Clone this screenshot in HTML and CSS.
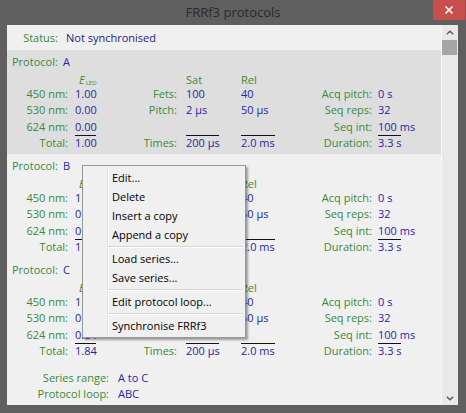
FILE: index.html
```html
<!DOCTYPE html>
<html>
<head>
<meta charset="utf-8">
<link rel="stylesheet" href="styles.css">
</head>
<body>
<div class="window">
  <div class="titlebar">
    <span class="title">FRRf3 protocols</span>
    <span class="close"><svg width="10" height="10" viewBox="0 0 10 10"><path d="M1.5 1.5L8.5 8.5M8.5 1.5L1.5 8.5" stroke="#fff" stroke-width="1.6"/></svg></span>
  </div>
  <div class="client">
    <div class="content">
      <div class="status"><span class="lbl">Status:</span><span class="val sv">Not synchronised</span></div>

      <div class="protocol selected">
        <div class="ptitle"><span class="lbl pl">Protocol:</span><span class="val">A</span></div>
        <div class="grid">
          <span></span><span class="hdr eled"><i>E</i><sub>LED</sub></span><span></span><span class="hdr v2">Sat</span><span class="hdr">Rel</span><span></span><span></span>
          <span class="lbl r">450 nm:</span><span class="val v1">1.00</span><span class="lbl r">Fets:</span><span class="val v2">100</span><span class="val">40</span><span class="lbl r">Acq pitch:</span><span class="val v4">0 s</span>
          <span class="lbl r">530 nm:</span><span class="val v1">0.00</span><span class="lbl r">Pitch:</span><span class="val v2">2 µs</span><span class="val">50 µs</span><span class="lbl r">Seq reps:</span><span class="val v4">32</span>
          <span class="lbl r">624 nm:</span><span class="val v1">0.00</span><span></span><span></span><span></span><span class="lbl r">Seq int:</span><span class="val v4">100 ms</span>
          <span class="lbl r">Total:</span><span class="val v1 ul ul-e">1.00</span><span class="lbl r">Times:</span><span class="val v2 ul ul-s">200 µs</span><span class="val ul ul-r">2.0 ms</span><span class="lbl r">Duration:</span><span class="val v4 ul ul-d">3.3 s</span>
        </div>
      </div>

      <div class="protocol">
        <div class="ptitle"><span class="lbl pl">Protocol:</span><span class="val">B</span></div>
        <div class="grid">
          <span></span><span class="hdr eled"><i>E</i><sub>LED</sub></span><span></span><span class="hdr v2">Sat</span><span class="hdr">Rel</span><span></span><span></span>
          <span class="lbl r">450 nm:</span><span class="val v1">1.00</span><span class="lbl r">Fets:</span><span class="val v2">100</span><span class="val">40</span><span class="lbl r">Acq pitch:</span><span class="val v4">0 s</span>
          <span class="lbl r">530 nm:</span><span class="val v1">0.00</span><span class="lbl r">Pitch:</span><span class="val v2">2 µs</span><span class="val">50 µs</span><span class="lbl r">Seq reps:</span><span class="val v4">32</span>
          <span class="lbl r">624 nm:</span><span class="val v1">0.00</span><span></span><span></span><span></span><span class="lbl r">Seq int:</span><span class="val v4">100 ms</span>
          <span class="lbl r">Total:</span><span class="val v1 ul ul-e">1.00</span><span class="lbl r">Times:</span><span class="val v2 ul ul-s">200 µs</span><span class="val ul ul-r">2.0 ms</span><span class="lbl r">Duration:</span><span class="val v4 ul ul-d">3.3 s</span>
        </div>
      </div>

      <div class="protocol">
        <div class="ptitle"><span class="lbl pl">Protocol:</span><span class="val">C</span></div>
        <div class="grid">
          <span></span><span class="hdr eled"><i>E</i><sub>LED</sub></span><span></span><span class="hdr v2">Sat</span><span class="hdr">Rel</span><span></span><span></span>
          <span class="lbl r">450 nm:</span><span class="val v1">1.00</span><span class="lbl r">Fets:</span><span class="val v2">100</span><span class="val">40</span><span class="lbl r">Acq pitch:</span><span class="val v4">0 s</span>
          <span class="lbl r">530 nm:</span><span class="val v1">0.00</span><span class="lbl r">Pitch:</span><span class="val v2">2 µs</span><span class="val">50 µs</span><span class="lbl r">Seq reps:</span><span class="val v4">32</span>
          <span class="lbl r">624 nm:</span><span class="val v1">0.84</span><span></span><span></span><span></span><span class="lbl r">Seq int:</span><span class="val v4">100 ms</span>
          <span class="lbl r">Total:</span><span class="val v1 ul ul-e">1.84</span><span class="lbl r">Times:</span><span class="val v2 ul ul-s">200 µs</span><span class="val ul ul-r">2.0 ms</span><span class="lbl r">Duration:</span><span class="val v4 ul ul-d">3.3 s</span>
        </div>
      </div>

      <div class="series">
        <span class="lbl r">Series range:</span><span class="val sv2">A to C</span>
        <span class="lbl r">Protocol loop:</span><span class="val sv2">ABC</span>
      </div>
    </div>
    <div class="scrollbar">
      <div class="arrow up"><svg width="8" height="5" viewBox="0 0 8 5"><path d="M0.8 4.2L4 1.2L7.2 4.2" fill="none" stroke="#5a5a5a" stroke-width="1.4"/></svg></div>
      <div class="thumb"></div>
      <div class="arrow down"><svg width="8" height="5" viewBox="0 0 8 5"><path d="M0.8 0.8L4 3.8L7.2 0.8" fill="none" stroke="#5a5a5a" stroke-width="1.4"/></svg></div>
    </div>
  </div>

  <div class="menu">
    <div class="item">Edit...</div>
    <div class="item">Delete</div>
    <div class="item">Insert a copy</div>
    <div class="item">Append a copy</div>
    <div class="sep"></div>
    <div class="item">Load series...</div>
    <div class="item">Save series...</div>
    <div class="sep"></div>
    <div class="item">Edit protocol loop...</div>
    <div class="sep"></div>
    <div class="item">Synchronise FRRf3</div>
  </div>
</div>
</body>
</html>
```
FILE: styles.css
```css
html, body {
  margin: 0;
  padding: 0;
  background: #5f5f5f;
}
body {
  font-family: "Open Sans", "Noto Sans", sans-serif;
  font-size: 11px;
}
.window {
  position: relative;
  width: 466px;
  height: 413px;
  background: #5f5f5f;
  display: flex;
  flex-direction: column;
  overflow: hidden;
}
.titlebar {
  height: 25px;
  display: grid;
  grid-template-columns: 1fr auto 1fr;
}
.title {
  grid-column: 2;
  font-size: 13px;
  line-height: 25px;
  color: #2a2a2a;
}
.close {
  grid-column: 3;
  justify-self: end;
  width: 32px;
  height: 20px;
  margin-right: 1px;
  background: #c7504c;
  display: flex;
  align-items: center;
  justify-content: center;
}
.client {
  margin: 0 8px 0 7px;
  height: 380px;
  display: flex;
  background: #f0f0f0;
}
.content {
  flex: 1;
  overflow: hidden;
}
.lbl { color: #398a39; white-space: nowrap; }
.val { color: #2626a6; white-space: nowrap; }
.sv { color: #22228a; }
.r { text-align: right; }

.status {
  height: 25px;
  line-height: 25px;
  display: grid;
  grid-template-columns: 51px auto;
}
.status .lbl { text-align: right; }
.status .val { padding-left: 8px; }

.protocol {
  height: 104px;
  box-sizing: border-box;
  padding-top: 4px;
}
.protocol.selected { background: #dedede; }
.ptitle {
  display: flex;
  line-height: 16px;
}
.ptitle .pl {
  width: 51px;
  padding-left: 5px;
}
.grid {
  display: grid;
  grid-template-columns: 61px 52px 57px 64px 56px 75px 1fr;
  grid-template-rows: 13px repeat(4, 16.3px);
  margin-top: 3px;
  line-height: 16px;
}
.hdr {
  color: #398a39;
  line-height: 13px;
}
.eled { padding-left: 11px; }
.eled i { font-style: italic; }
.eled sub {
  font-size: 6px;
  vertical-align: -1px;
  margin-left: 1px;
}
.v1 { padding-left: 7px; }
.v2 { padding-left: 9px; }
.v4 { padding-left: 6px; }
.ul {
  background-image: linear-gradient(#111, #111);
  background-repeat: no-repeat;
  background-origin: content-box;
  background-position: 0 0;
}
.ul-e { background-size: 21px 1px; }
.ul-s { background-size: 33px 1px; }
.ul-r { background-size: 34px 1px; }
.ul-d { background-size: 23px 1px; }

.series {
  padding-top: 8px;
  display: grid;
  grid-template-columns: 102px auto;
  line-height: 16px;
}
.sv2 { padding-left: 9px; }

.scrollbar {
  width: 17px;
  background: #e9e9e9;
  border-left: 1px solid #f7f7f7;
  box-sizing: border-box;
  display: flex;
  flex-direction: column;
}
.arrow {
  display: flex;
  align-items: center;
  justify-content: center;
}
.arrow.up { height: 15px; }
.arrow.down { height: 13px; margin-top: auto; }
.thumb {
  height: 15px;
  margin: 0 1px 0 0;
  background: #a6a6a6;
}

.menu {
  position: absolute;
  left: 82px;
  top: 165px;
  width: 164px;
  box-sizing: border-box;
  padding: 2px;
  border: 1px solid #979797;
  background:
    linear-gradient(to right, transparent 24px, #e2e2e2 24px, #e2e2e2 25px, #ffffff 25px, #ffffff 26px, transparent 26px),
    #f0f0f0;
  box-shadow: 2px 2px 2px rgba(0, 0, 0, 0.35);
  color: #000;
}
.item {
  height: 19px;
  line-height: 19px;
  padding-left: 27px;
  white-space: nowrap;
}
.sep {
  height: 5px;
  margin-left: 22px;
  background: linear-gradient(to bottom, transparent 2px, #d7d7d7 2px, #d7d7d7 3px, #ffffff 3px, #ffffff 4px, transparent 4px);
}
```
